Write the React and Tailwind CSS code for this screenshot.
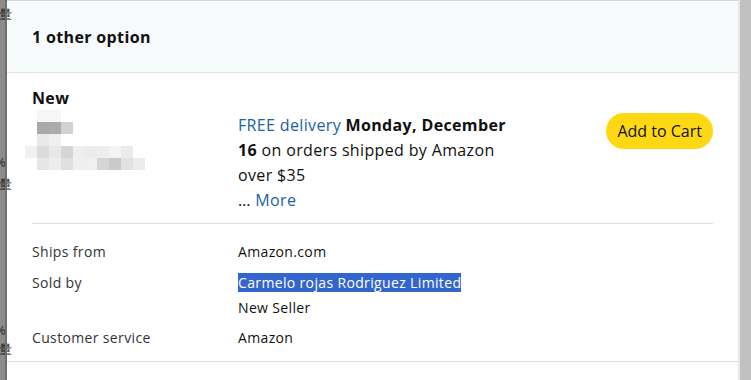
import React from "react";

// pixelated (blurred) product thumbnail, 12px cells
const mosaic = [
  ["bg-white", "bg-[#f6f6f6]", "bg-[#f6f6f6]", "bg-white", "bg-white", "bg-white", "bg-white", "bg-white", "bg-white", "bg-white"],
  ["bg-white", "bg-[#a9a9a9]", "bg-[#ababab]", "bg-[#d2d2d2]", "bg-white", "bg-white", "bg-white", "bg-white", "bg-white", "bg-white"],
  ["bg-white", "bg-[#e9e9e9]", "bg-[#f0f0f0]", "bg-white", "bg-white", "bg-white", "bg-white", "bg-white", "bg-white", "bg-white"],
  ["bg-[#f1f1f1]", "bg-[#dcdcdc]", "bg-[#e8e8e8]", "bg-[#d5d5d5]", "bg-[#eeeeee]", "bg-[#ebebeb]", "bg-[#eeeeee]", "bg-[#f3f3f3]", "bg-[#ebebeb]", "bg-white"],
  ["bg-white", "bg-[#e6e6e6]", "bg-[#ededed]", "bg-[#e0e0e0]", "bg-[#efefef]", "bg-[#f0f0f0]", "bg-[#d5d5d5]", "bg-[#c9c9c9]", "bg-[#e2e2e2]", "bg-[#ececec]"],
];

const App = () => {
  return (
    <div className="flex h-[380px] w-[751px] overflow-hidden bg-white font-['Open_Sans',sans-serif] tracking-[0.022em] text-[#0f1111]">
      {/* dimmed page behind the popover */}
      <div className="relative w-[7px] shrink-0 bg-[#8c8c8c] text-[13px] leading-none text-[#222]">
        <span className="absolute left-[-1px] top-[8px]">量</span>
        <span className="absolute left-[-5px] top-[156px]">%</span>
        <span className="absolute left-[-1px] top-[178px]">量</span>
        <span className="absolute left-[-5px] top-[324px]">%</span>
        <span className="absolute left-[-1px] top-[343px]">量</span>
        <div className="absolute right-0 top-0 h-full w-[2px] bg-[#6e6e6e]" />
      </div>

      <div className="flex w-[731px] shrink-0 flex-col">
        <div className="h-[2px] border-t border-[#d5d5d5] bg-white" />
        <div className="flex h-[71px] items-center border-b border-[#e3e6e6] bg-[#f7fafa] px-[25px]">
          <h2 className="mt-[-1px] text-[16px] font-bold">1 other option</h2>
        </div>

        <div className="px-[25px] pt-[13px]">
          <div className="text-[16px] font-bold leading-[24px]">New</div>
          <div className="mt-[3px] flex">
            <div className="w-[206px] shrink-0">
              <div className="mt-[-3px] ml-[-7px] flex w-[120px] flex-col">
                {mosaic.map((row, i) => (
                  <div key={i} className="flex">
                    {row.map((c, j) => (
                      <div key={j} className={`h-[12px] w-[12px] ${c}`} />
                    ))}
                  </div>
                ))}
              </div>
            </div>
            <div className="w-[280px] text-[16px] leading-[25px]">
              <span className="text-[#2162a1]">FREE delivery</span>{" "}
              <span className="font-bold">Monday, December 16</span> on orders shipped by Amazon over $35
              <div>
                … <span className="text-[#2162a1]">More</span>
              </div>
            </div>
            <div className="ml-auto">
              <button className="h-[36px] rounded-full bg-[#ffd814] px-[11px] text-[16px] tracking-normal text-[#0f1111]">
                Add to Cart
              </button>
            </div>
          </div>
          <div className="mt-[10px] h-px bg-[#dddddd]" />
          <div className="grid grid-cols-[206px_1fr] gap-y-[5.5px] pb-[11px] pt-[15px] text-[14px] leading-[25px]">
            <div className="text-[#333333]">Ships from</div>
            <div>Amazon.com</div>
            <div className="text-[#333333]">Sold by</div>
            <div>
              <span className="bg-[#3366cc] text-white">Carmelo rojas Rodriguez Limited</span>
              <div>New Seller</div>
            </div>
            <div className="text-[#333333]">Customer service</div>
            <div>Amazon</div>
          </div>
        </div>
        <div className="h-px bg-[#dddddd]" />
      </div>

      <div className="w-[2px] shrink-0 bg-[#e8e8e8]" />
      <div className="flex-1 bg-[#c1c1c1]" />
    </div>
  );
};

export default App;
